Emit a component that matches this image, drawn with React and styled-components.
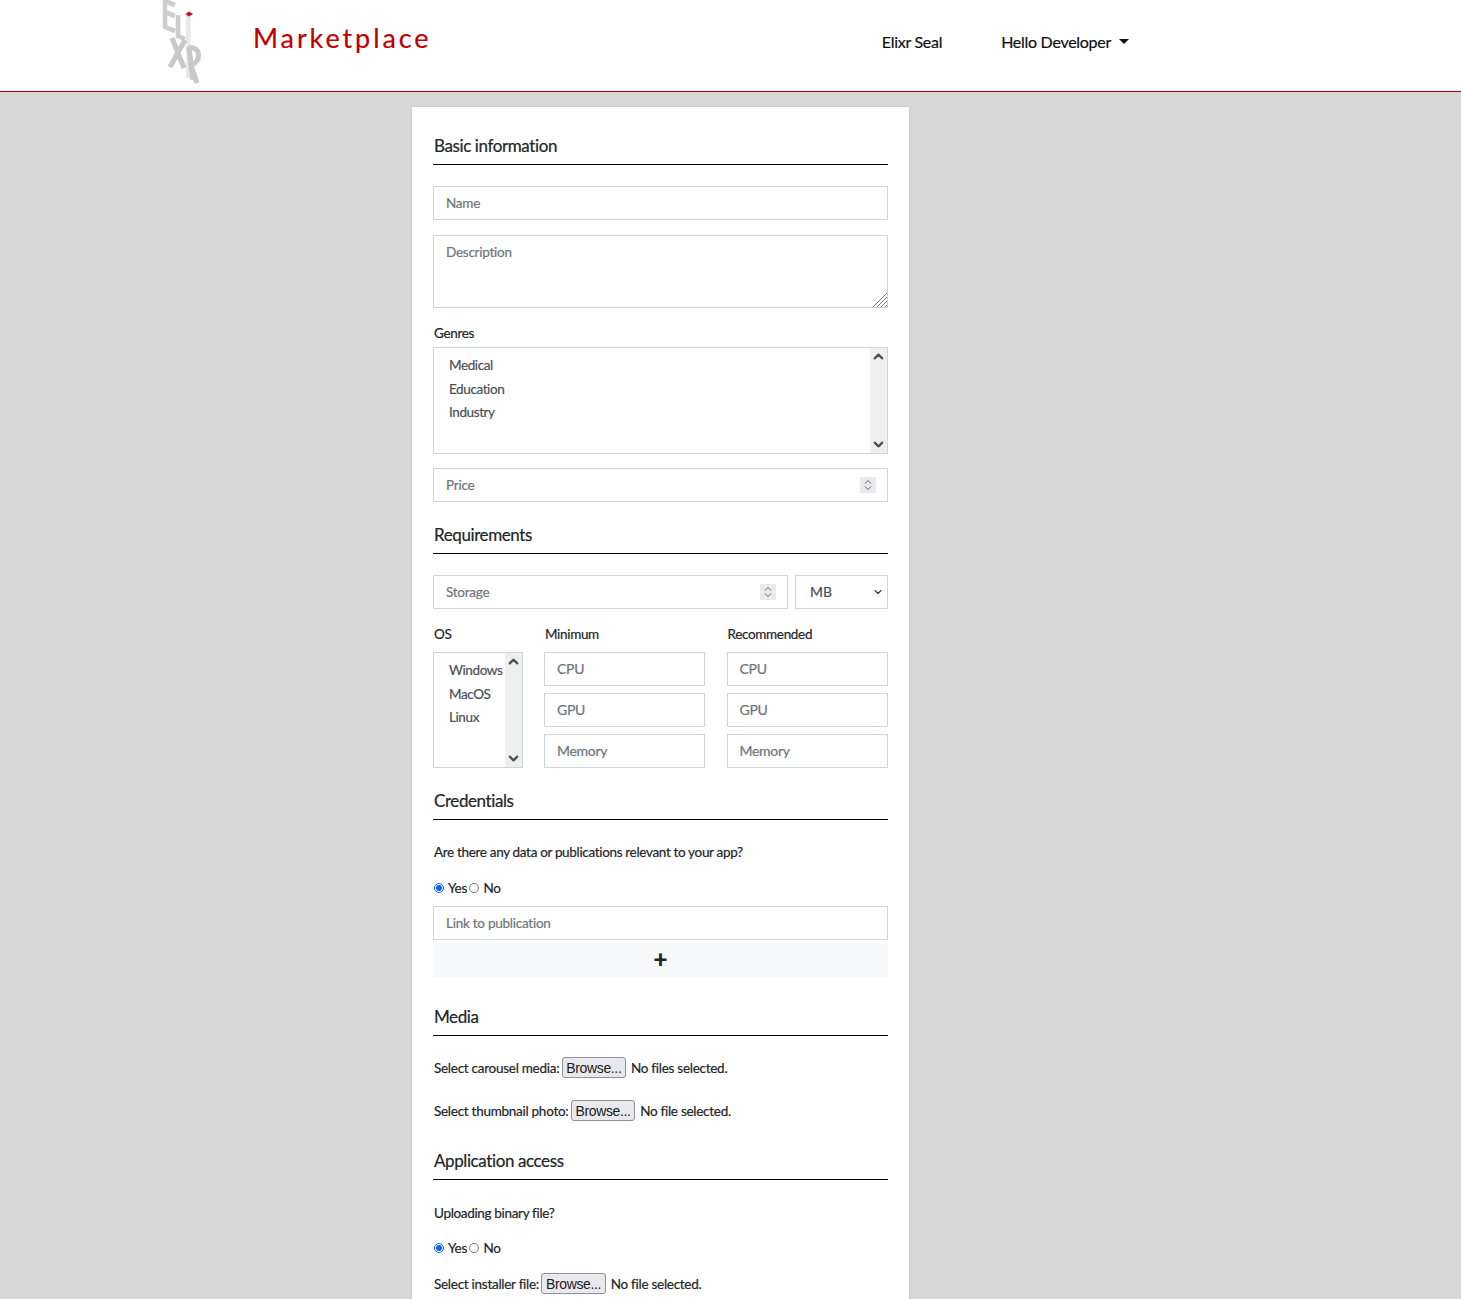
import React from "react";
import styled, { createGlobalStyle } from "styled-components";
import { ChevronUp, ChevronDown } from "lucide-react";

const GlobalStyle = createGlobalStyle`
  html, body {
    margin: 0;
    height: 100vh;
    overflow: hidden;
    background-color: #d8d8d8;
    font-family: Lato, "Open Sans", sans-serif;
    color: #212529;
    -webkit-text-stroke: 0.2px;
  }
  * { box-sizing: border-box; }
`;

const Nav = styled.nav`
  height: 92px;
  background-color: #fff;
  border-bottom: 1px solid #b00000;
  display: flex;
  align-items: flex-start;
  padding: 0 332px 0 160px;
`;
const LogoMark = styled.svg`
  width: 44px;
  height: 88px;
  flex: none;
`;
const Brand = styled.div`
  margin-left: 49px;
  margin-top: 20px;
  font-size: 27px;
  line-height: 36px;
  letter-spacing: 2.9px;
  color: #c00000;
  white-space: nowrap;
`;
const NavLinks = styled.div`
  margin-left: auto;
  margin-top: 32px;
  display: flex;
  align-items: center;
  font-size: 16px;
  line-height: 20px;
  color: #111;
  letter-spacing: -0.28px;
`;
const NavLink = styled.span`
  margin-left: ${(p) => p.$gap || 0}px;
`;
const Caret = styled.span`
  margin-left: 8px;
  width: 0;
  height: 0;
  border-top: 5px solid #111;
  border-left: 5px solid transparent;
  border-right: 5px solid transparent;
  margin-top: -2px;
`;

const Card = styled.main`
  width: 497px;
  margin: 15px auto 0 412px;
  background-color: #fff;
  padding: 25px 21px 40px;
  box-shadow: 0 0 2px rgba(0, 0, 0, 0.12);
`;
const Heading = styled.h2`
  margin: ${(p) => p.$top || 0}px 0 0;
  padding: 0 0 4px 1px;
  font-size: 17px;
  line-height: 28px;
  font-weight: 400;
  letter-spacing: -0.4px;
  border-bottom: 1px solid #000;
`;
const Field = styled.div`
  position: relative;
  margin-top: ${(p) => p.$top || 0}px;
`;
const Input = styled.input`
  display: block;
  width: 100%;
  height: 34px;
  border: 1px solid #ced4da;
  border-radius: 0;
  padding: 0 12px;
  font-family: inherit;
  font-size: 13.5px;
  letter-spacing: -0.25px;
  background: #fff;
  outline: none;
  &::placeholder { color: #6c757d; opacity: 1; }
`;
const SpecInput = styled(Input)`
  padding-bottom: 2px;
  font-size: 14px;
  letter-spacing: -0.3px;
`;
const TextArea = styled.textarea`
  display: block;
  width: 100%;
  height: 73px;
  border: 1px solid #ced4da;
  border-radius: 0;
  padding: 7px 12px;
  font-family: inherit;
  font-size: 13.5px;
  line-height: 18px;
  letter-spacing: -0.25px;
  resize: none;
  outline: none;
  &::placeholder { color: #6c757d; opacity: 1; }
`;
const Grip = styled.svg`
  position: absolute;
  right: 1px;
  bottom: 1px;
  width: 15px;
  height: 15px;
`;
const Spinner = styled.div`
  position: absolute;
  right: 12px;
  top: 9px;
  width: 16px;
  height: 16px;
  background-color: #e9e9ed;
  display: flex;
  flex-direction: column;
  align-items: center;
  justify-content: center;
  color: #5f5f68;
`;
const SpinArrow = styled.svg`
  width: 8px;
  height: 6px;
  flex: none;
`;
const Label = styled.div`
  margin-top: ${(p) => p.$top || 0}px;
  padding-left: 1px;
  font-size: 13.5px;
  line-height: 20px;
  letter-spacing: -0.33px;
  color: #212529;
`;
const ListBox = styled.div`
  display: flex;
  height: ${(p) => p.$height}px;
  margin-top: ${(p) => p.$top || 0}px;
  border: 1px solid #ced4da;
`;
const ListItems = styled.ul`
  flex: 1;
  list-style: none;
  margin: 0;
  padding: 6px 0 0 15px;
  font-size: 13.5px;
  line-height: 23.5px;
  letter-spacing: -0.4px;
  color: #495057;
  white-space: nowrap;
  min-width: 0;
`;
const ScrollRail = styled.div`
  flex: none;
  width: 17px;
  background-color: #efefef;
  display: flex;
  flex-direction: column;
  justify-content: space-between;
  align-items: center;
  padding: 1px 0;
  color: #505050;
`;
const Row = styled.div`
  display: flex;
  gap: 7px;
  margin-top: 21px;
`;
const GrowField = styled(Field)`
  flex: 1;
`;
const SelectBox = styled.div`
  flex: none;
  width: 93px;
  height: 34px;
  border: 1px solid #ced4da;
  display: flex;
  align-items: center;
  justify-content: space-between;
  padding: 0 3px 1px 14px;
  font-size: 14px;
  color: #495057;
`;
const ReqGrid = styled.div`
  display: grid;
  grid-template-columns: 111px 182.5px 161.5px;
  margin-top: 15px;
`;
const Column = styled.div`
  display: flex;
  flex-direction: column;
  padding-right: ${(p) => p.$pad || 0}px;
`;
const ColumnInputs = styled.div`
  display: flex;
  flex-direction: column;
  gap: 7px;
  margin-top: 8px;
`;
const RadioRow = styled.div`
  display: flex;
  align-items: center;
  height: 20px;
  margin-top: ${(p) => p.$top || 0}px;
  font-size: 13.5px;
  letter-spacing: -0.33px;
`;
const Radio = styled.input.attrs({ type: "radio" })`
  margin: 0 4px 0 1px;
  width: 10px;
  height: 10px;
  accent-color: #0b63e5;
`;
const RadioText = styled.span`
  margin-right: 1.5px;
`;
const AddButton = styled.div`
  height: 34px;
  margin-top: 3px;
  background-color: #f8f9fa;
  display: flex;
  align-items: center;
  justify-content: center;
  padding-bottom: 3px;
  font-size: 24px;
  font-weight: 900;
  color: #212529;
`;
const FileRow = styled.div`
  display: flex;
  align-items: center;
  height: 22px;
  margin-top: ${(p) => p.$top || 0}px;
  padding-left: 1px;
  font-size: 13.5px;
  letter-spacing: -0.27px;
  white-space: nowrap;
`;
const Browse = styled.button`
  margin: 0 5px 1px 2.5px;
  height: 21px;
  padding: 0 3.5px;
  border: 1px solid #8f8f9d;
  border-radius: 3px;
  background-color: #e9e9ed;
  font-family: "Liberation Sans", Arial, sans-serif;
  font-size: 14px;
  letter-spacing: -0.35px;
  color: #1b1b1b;
  -webkit-text-stroke: 0;
`;

function Logo() {
  return (
    <LogoMark viewBox="0 0 44 88">
      <g fill="none" stroke="#cdcdcd" strokeWidth="4.6">
        <path d="M5 -2V27L15 31" />
        <path d="M5 12L15 16M5 1L15 5" />
        <path d="M18 15V36L25 39" />
      </g>
      <rect x="26" y="15" width="4.5" height="63" fill="#e8e8e8" />
      <path d="M25.5 14L29 11.5L33 14L29 16.5Z" fill="#c8102e" />
      <g fill="none" stroke="#c8c8c8" strokeWidth="5">
        <path d="M12 38L24 68M25 40L10 67" />
        <path d="M29 47L33 80M29 48C41 46 42 62 31 65L37 83" />
      </g>
    </LogoMark>
  );
}

function Spin() {
  return (
    <Spinner>
      <SpinArrow viewBox="0 0 8 6">
        <path d="M1 4.5L4 1.5L7 4.5" fill="none" stroke="currentColor" />
      </SpinArrow>
      <SpinArrow viewBox="0 0 8 6">
        <path d="M1 1.5L4 4.5L7 1.5" fill="none" stroke="currentColor" />
      </SpinArrow>
    </Spinner>
  );
}

function ListSelect({ items, height, top }) {
  return (
    <ListBox $height={height} $top={top}>
      <ListItems>
        {items.map((item) => (
          <li key={item}>{item}</li>
        ))}
      </ListItems>
      <ScrollRail>
        <ChevronUp size={15} strokeWidth={3.6} />
        <ChevronDown size={15} strokeWidth={3.6} />
      </ScrollRail>
    </ListBox>
  );
}

function SpecColumn({ title, pad }) {
  return (
    <Column $pad={pad}>
      <Label>{title}</Label>
      <ColumnInputs>
        <SpecInput placeholder="CPU" />
        <SpecInput placeholder="GPU" />
        <SpecInput placeholder="Memory" />
      </ColumnInputs>
    </Column>
  );
}

function YesNo({ name, top }) {
  return (
    <RadioRow $top={top}>
      <Radio name={name} defaultChecked />
      <RadioText>Yes</RadioText>
      <Radio name={name} />
      <RadioText>No</RadioText>
    </RadioRow>
  );
}

function FilePick({ label, empty, top }) {
  return (
    <FileRow $top={top}>
      {label}
      <Browse type="button">Browse...</Browse>
      {empty}
    </FileRow>
  );
}

export default function App() {
  return (
    <>
      <GlobalStyle />
      <Nav>
        <Logo />
        <Brand>Marketplace</Brand>
        <NavLinks>
          <NavLink>Elixr Seal</NavLink>
          <NavLink $gap={59}>Hello Developer</NavLink>
          <Caret />
        </NavLinks>
      </Nav>
      <Card>
        <Heading>Basic information</Heading>
        <Field $top={21}>
          <Input placeholder="Name" />
        </Field>
        <Field $top={15}>
          <TextArea placeholder="Description" />
          <Grip viewBox="0 0 15 15">
            <path d="M15 1L1 15M15 5L5 15M15 9L9 15M15 13L13 15" stroke="#777" fill="none" />
          </Grip>
        </Field>
        <Label $top={15}>Genres</Label>
        <ListSelect items={["Medical", "Education", "Industry"]} height={107} top={4} />
        <Field $top={14}>
          <Input placeholder="Price" />
          <Spin />
        </Field>

        <Heading $top={19}>Requirements</Heading>
        <Row>
          <GrowField>
            <Input placeholder="Storage" />
            <Spin />
          </GrowField>
          <SelectBox>
            MB
            <ChevronDown size={12} strokeWidth={2.2} color="#333" />
          </SelectBox>
        </Row>
        <ReqGrid>
          <Column $pad={21}>
            <Label>OS</Label>
            <ListSelect items={["Windows", "MacOS", "Linux"]} height={116} top={8} />
          </Column>
          <SpecColumn title="Minimum" pad={22} />
          <SpecColumn title="Recommended" />
        </ReqGrid>

        <Heading $top={19}>Credentials</Heading>
        <Label $top={22}>Are there any data or publications relevant to your app?</Label>
        <YesNo name="publications" top={16} />
        <Field $top={8}>
          <Input placeholder="Link to publication" />
        </Field>
        <AddButton>+</AddButton>

        <Heading $top={26}>Media</Heading>
        <FilePick label="Select carousel media:" empty="No files selected." top={21} />
        <FilePick label="Select thumbnail photo:" empty="No file selected." top={21} />

        <Heading $top={25}>Application access</Heading>
        <Label $top={23}>Uploading binary file?</Label>
        <YesNo name="binary" top={15} />
        <FilePick label="Select installer file:" empty="No file selected." top={15} />
      </Card>
    </>
  );
}
